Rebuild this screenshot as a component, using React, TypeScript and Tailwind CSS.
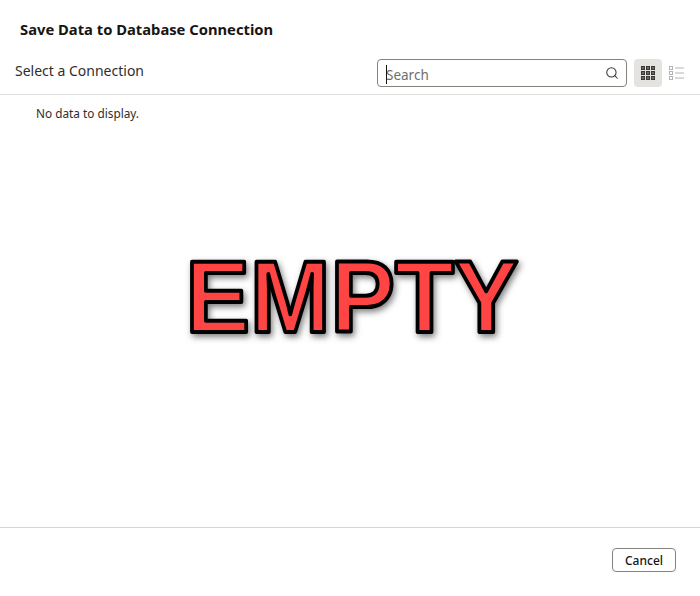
import { Search } from "lucide-react"

function GridIcon() {
  return (
    <svg width="14" height="14" viewBox="0 0 14 14" fill="none" stroke="#3a3936" strokeWidth="1">
      {[0, 5, 10].map((y) =>
        [0, 5, 10].map((x) => <rect key={`${x}-${y}`} x={x + 0.5} y={y + 0.5} width="3" height="3" fill="#6b6a67" />)
      )}
    </svg>
  )
}

function ListIcon() {
  return (
    <svg width="15" height="14" viewBox="0 0 15 14" fill="none" stroke="#b5b4b0" strokeWidth="1">
      {[0, 5, 10].map((y) => (
        <g key={y}>
          <rect x="0.5" y={y + 0.5} width="3" height="3" />
          <path d={`M6 ${y + 2}H15`} />
        </g>
      ))}
    </svg>
  )
}

export default function App() {
  return (
    <div className="relative w-[700px] h-[596px] bg-white overflow-hidden flex flex-col font-['Noto_Sans',sans-serif] text-[#161513]">
      {/* Title */}
      <h1 className="pl-5 pt-[19px] h-[48px] text-[14.75px] leading-[20px] font-bold">Save Data to Database Connection</h1>

      {/* Toolbar */}
      <div className="h-[47px] pl-[15px] pr-[16px] flex items-start border-b border-[#e0dfdc]">
        <span className="mt-[13px] text-[14px] leading-[20px] text-[#2f2e2c]">Select a Connection</span>
        <div className="ml-auto flex items-center">
          <div className="relative w-[250px] h-[28px] mt-[11px] border border-[#86837e] rounded-[4px] flex items-center pl-[8px] pr-[7px]">
            <div className="absolute left-[8px] top-[5px] w-px h-[19px] bg-[#161513]" />
            <span className="text-[13.5px] leading-[20px] text-[#6f6e6b] mt-[4px]">Search</span>
            <Search className="ml-auto w-[14px] h-[14px] text-[#3a3936]" strokeWidth={1.8} />
          </div>
          <div className="ml-[7px] mt-[11px] w-[28px] h-[28px] rounded-[4px] bg-[#e4e3df] flex items-center justify-center">
            <GridIcon />
          </div>
          <div className="ml-[7px] mt-[11px] w-[15px] h-[28px] flex items-center justify-center">
            <ListIcon />
          </div>
        </div>
      </div>

      {/* Body */}
      <div className="flex-1 pl-[36px] pt-[9px] text-[11.8px] leading-[18px] text-[#2f2e2c]">No data to display.</div>

      {/* Footer */}
      <div className="h-[69px] border-t border-[#d6d5d1] flex items-start justify-end pr-[24px] pt-[20px]">
        <button className="w-[64px] h-[24px] pt-[1px] border border-[#86837e] rounded-[4px] text-[12px] font-medium leading-none text-[#161513]">
          Cancel
        </button>
      </div>

      {/* Overlay */}
      <svg className="absolute left-0 top-0 w-[700px] h-[596px] pointer-events-none" viewBox="0 0 700 596">
        <text
          x="352"
          y="332"
          textAnchor="middle"
          textLength="333"
          lengthAdjust="spacingAndGlyphs"
          className="font-['Liberation_Sans',sans-serif] font-bold text-[102px] fill-[#ff4444] stroke-black [stroke-width:4px] [stroke-linejoin:round] [filter:drop-shadow(2px_3px_3px_rgba(0,0,0,0.5))]"
        >
          EMPTY
        </text>
      </svg>
    </div>
  )
}
